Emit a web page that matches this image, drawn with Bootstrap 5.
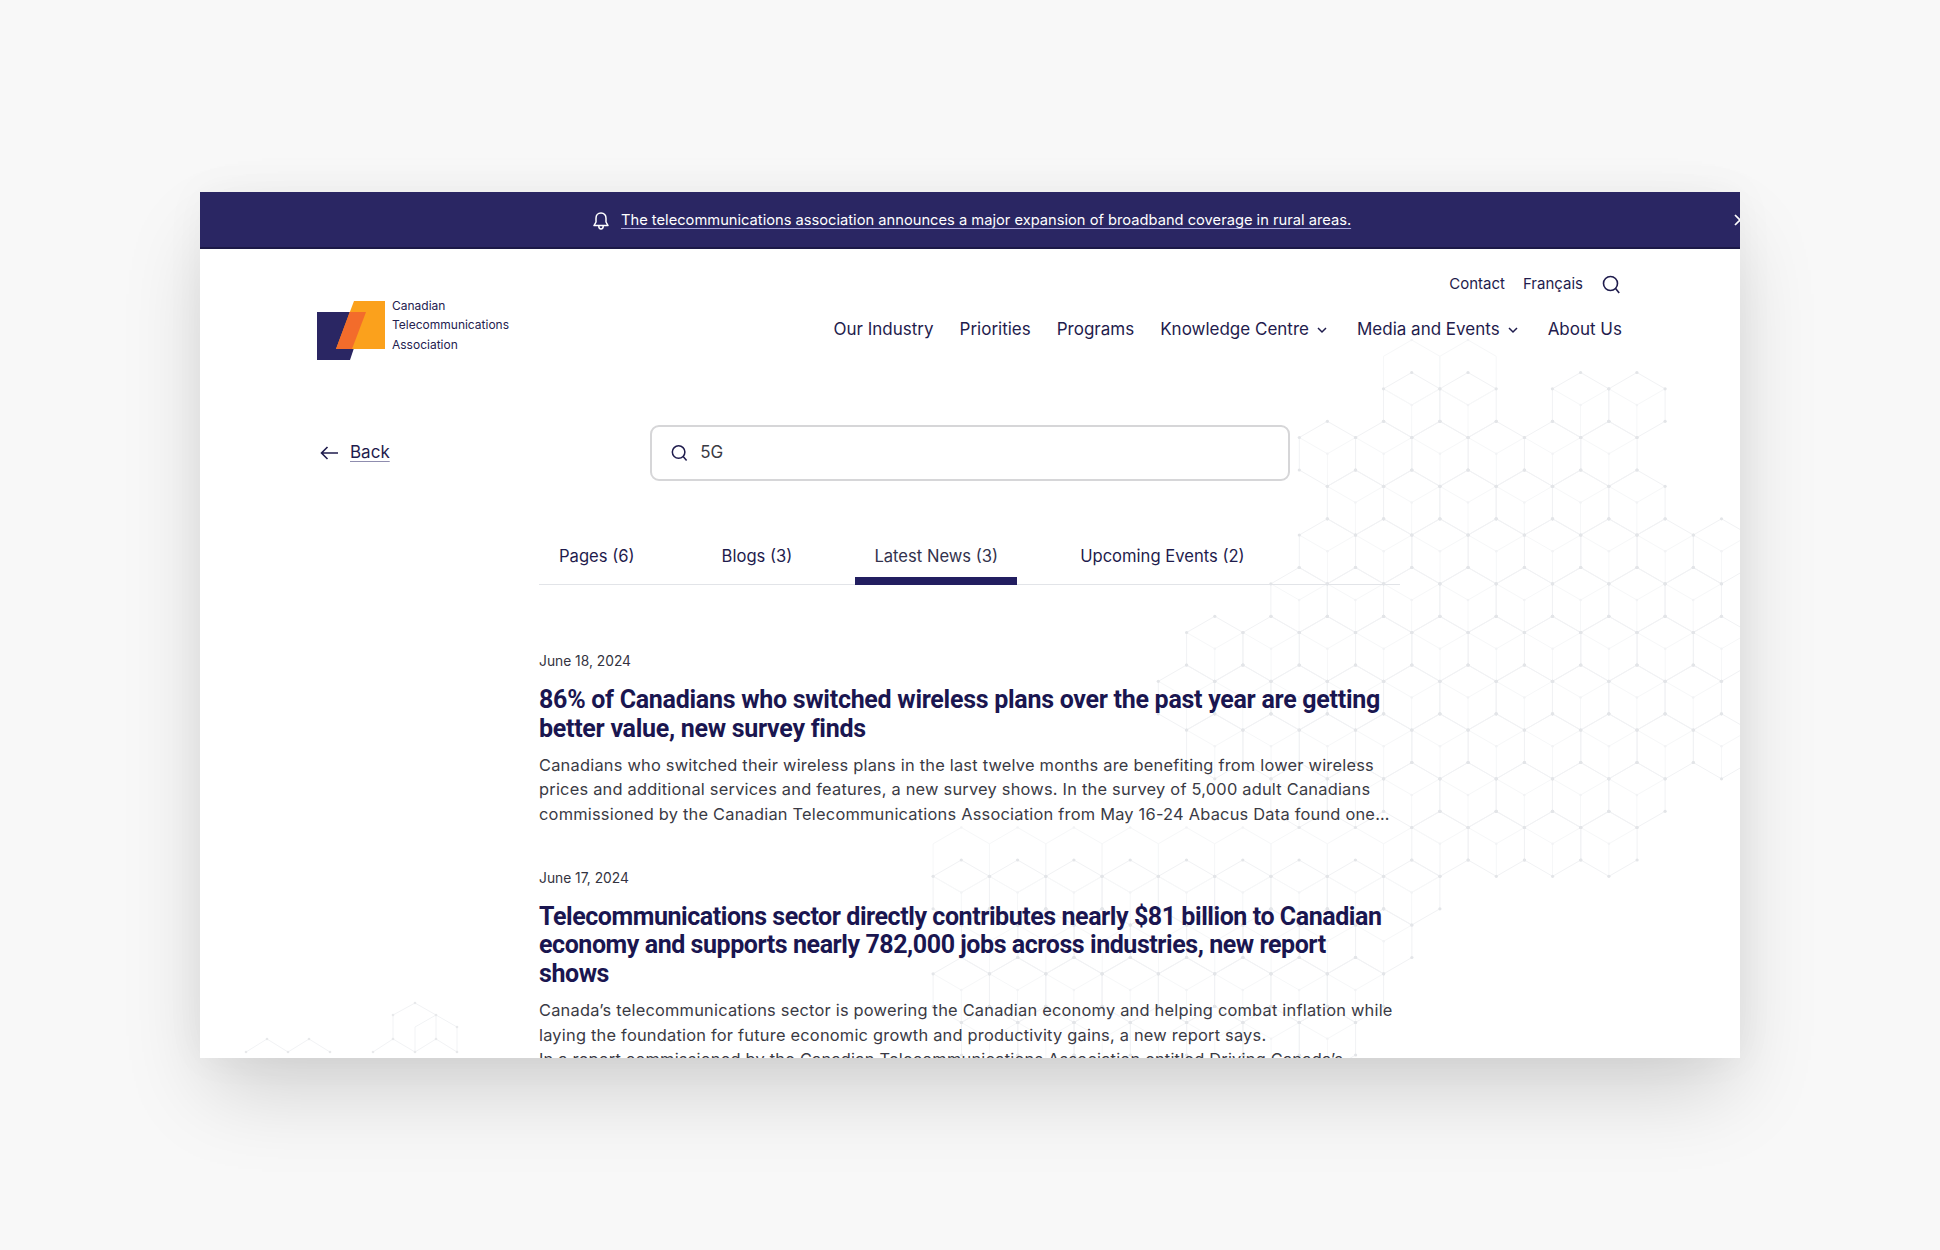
<!DOCTYPE html>
<html lang="en">
<head>
  <meta charset="UTF-8" />
  <meta name="viewport" content="width=device-width, initial-scale=1.0" />
  <title>Search | Canadian Telecommunications Association</title>
  <link href="https://cdn.jsdelivr.net/npm/bootstrap@5.3.0/dist/css/bootstrap.min.css" rel="stylesheet">
  <style>
    html, body { height: 1250px; overflow: hidden; }
    body { background: #f8f8f8; padding-top: 192px; font-family: Inter, "Liberation Sans", sans-serif; color: #1f1c4d; }
    .site-window { width: 1540px; height: 866px; margin: 0 auto; background: #fff; position: relative; overflow: hidden; }
    .shadow-wrap { width: 1540px; margin: 0 auto; box-shadow: 0 40px 80px -10px rgba(0,0,0,.17), 0 0 40px rgba(0,0,0,.04); height: 866px; }
    .hex-bg { position: absolute; left: 0; top: 0; width: 1540px; height: 866px; }
    .alert-bar { height: 57px; background: #2a2663; border-bottom: 2px solid #1c1947; color: #fff; position: relative; font-size: 14.7px; padding: 2px 0 0 392px; gap: 11px; }
    .alert-bar a { color: #fff; text-decoration-color: #a9a6dc; text-underline-offset: 3px; }
    .alert-close { position: absolute; right: -7px; top: 21px; background: none; border: 0; padding: 0; line-height: 0; }
    .site-body { position: relative; padding: 24px 118px 0 117px; }
    .logo-words { font-size: 12px; line-height: 19.4px; margin: -5px 0 0 6px; color: #24214f; }
    .logo-block { margin-top: 28px; }
    .util-links { height: 22px; font-size: 15px; gap: 18px; padding-right: 1px; }
    .util-links svg { margin-left: 1px; }
    .util-links a, .main-links a { color: #1f1c4d; text-decoration: none; }
    .main-links { margin-top: 22px; height: 26px; font-size: 17px; }
    .main-links a { margin-left: 26px; }
    .main-links a.has-sub { margin-right: 22px; position: relative; }
    .main-links a.has-sub svg { position: absolute; right: -18px; top: 10px; }
    .search-row { margin-top: 65px; height: 56px; }
    .back-col { width: 333px; padding-left: 3px; font-size: 17px; }
    .back-col a { color: #1f1c4d; text-decoration-color: #8f8daf; text-underline-offset: 3px; }
    .search-box { width: 640px; height: 56px; border: 2px solid #d6d6d8; border-radius: 9px; background: #fff; padding: 0 19px; }
    .search-box input { font-size: 17px; color: #3a3a44; font-family: inherit; background: transparent; }
    .tab-strip { margin: 49px 0 0 222px; width: 861px; height: 55px; border-bottom: 1px solid #e2e4e8; }
    .tab-strip .nav-link { height: 55px; padding: 14px 19px 0; color: #1f1c4d; font-size: 16.6px; margin-right: 44px; position: relative; }
    .tab-strip .nav-item:first-child .nav-link { padding-left: 20px; margin-right: 49px; }
    .tab-strip .nav-link.active { color: #33324d; }
    .tab-strip .nav-link.active::after { content: ""; position: absolute; left: 0; right: 0; bottom: 0; height: 8px; background: #221e60; }
    .news-list { margin: 66px 0 0 222px; width: 870px; }
    .news-item { margin-bottom: 41.5px; }
    .news-date { font-size: 13.8px; line-height: 20px; margin-bottom: 15px; color: #333340; }
    .news-title { font-family: Roboto, sans-serif; font-weight: 700; font-size: 25px; line-height: 28.6px; letter-spacing: -.28px; color: #1a1650; margin: 0 0 10px; }
    .news-item + .news-item .news-title { letter-spacing: -.44px; }
    .news-text { font-size: 16.4px; line-height: 24.3px; letter-spacing: .22px; color: #3a3a44; margin: 0; }
  </style>
</head>
<body>
  <div class="shadow-wrap">
    <div class="site-window">
      <svg class="hex-bg" id="hexBg" viewBox="200 192 1540 866" fill="none">
        <g stroke="#f2f3f5" fill="none">
          <path d="M246 1052L267 1039L288 1052L309 1039L330 1052M373 1052L393 1039L415 1052L436 1039L457 1052M393 1039V1015L415 1003L436 1015V1039M415 1027V1052M415 1027L436 1015L457 1027V1052"/>
        </g>
        <g fill="#e8e9eb">
          <circle cx="246" cy="1052" r="1.3"/><circle cx="267" cy="1039" r="1.3"/><circle cx="288" cy="1052" r="1.3"/>
          <circle cx="309" cy="1039" r="1.3"/><circle cx="330" cy="1052" r="1.3"/><circle cx="373" cy="1052" r="1.3"/>
          <circle cx="393" cy="1039" r="1.3"/><circle cx="393" cy="1015" r="1.3"/><circle cx="415" cy="1003" r="1.3"/>
          <circle cx="436" cy="1015" r="1.3"/><circle cx="436" cy="1039" r="1.3"/><circle cx="415" cy="1052" r="1.3"/>
          <circle cx="457" cy="1027" r="1.3"/><circle cx="457" cy="1052" r="1.3"/>
        </g>
      </svg>

      <div class="alert-bar d-flex align-items-center">
        <svg width="18" height="20" viewBox="0 0 18 20" fill="none" stroke="#fff" stroke-width="1.5" stroke-linejoin="round"><path d="M9 2C5.8 2 4 4.4 4 7.2V11L2 14.6H16L14 11V7.2C14 4.4 12.2 2 9 2Z"/><path d="M6.8 15C6.8 17 7.8 18 9 18S11.2 17 11.2 15"/></svg>
        <a href="#">The telecommunications association announces a major expansion of broadband coverage in rural areas.</a>
        <button class="alert-close" type="button" aria-label="Close"><svg width="14" height="14" viewBox="0 0 14 14" stroke="#fff" stroke-width="1.7"><path d="M2 2L12 12M12 2L2 12"/></svg></button>
      </div>

      <div class="site-body">
        <header class="d-flex justify-content-between align-items-start">
          <a href="#" class="logo-block d-flex text-decoration-none">
            <svg width="69" height="59" viewBox="317 301 69 59">
              <path d="M317 312H366L350 360H317Z" fill="#2a2663"/>
              <path d="M354 301H385V349H336Z" fill="#fba11c"/>
              <path d="M349.7 312H366L352 349H336Z" fill="#f36c2b"/>
            </svg>
            <p class="logo-words">Canadian<br>Telecommunications<br>Association</p>
          </a>
          <div class="d-flex flex-column align-items-end">
            <div class="util-links d-flex align-items-center">
              <a href="#">Contact</a>
              <a href="#">Français</a>
              <svg width="19" height="19" viewBox="0 0 19 19" fill="none" stroke="#1f1c4d" stroke-width="1.6"><circle cx="8.5" cy="8.5" r="7"/><path d="M13.6 13.6L17.2 18"/></svg>
            </div>
            <nav class="main-links d-flex align-items-center">
              <a href="#">Our Industry</a>
              <a href="#">Priorities</a>
              <a href="#">Programs</a>
              <a href="#" class="has-sub">Knowledge Centre<svg width="10" height="7" viewBox="0 0 10 7" fill="none" stroke="#1f1c4d" stroke-width="1.5"><path d="M1 1L5 5L9 1"/></svg></a>
              <a href="#" class="has-sub">Media and Events<svg width="10" height="7" viewBox="0 0 10 7" fill="none" stroke="#1f1c4d" stroke-width="1.5"><path d="M1 1L5 5L9 1"/></svg></a>
              <a href="#">About Us</a>
            </nav>
          </div>
        </header>

        <div class="search-row d-flex align-items-center">
          <div class="back-col d-flex align-items-center gap-2">
            <svg width="18" height="14" viewBox="0 0 18 14" fill="none" stroke="#1f1c4d" stroke-width="1.6"><path d="M18 7H1.5M7.5 1L1.5 7L7.5 13"/></svg>
            <a href="#" class="ms-1">Back</a>
          </div>
          <div class="search-box d-flex align-items-center gap-2">
            <svg width="18" height="18" viewBox="0 0 18 18" fill="none" stroke="#1f1c4d" stroke-width="1.6"><circle cx="8" cy="8" r="6.6"/><path d="M12.8 12.8L16.4 17"/></svg>
            <input type="text" class="form-control border-0 p-0 shadow-none ms-1" value="5G">
          </div>
        </div>

        <ul class="nav tab-strip">
          <li class="nav-item"><a class="nav-link" href="#">Pages (6)</a></li>
          <li class="nav-item"><a class="nav-link" href="#">Blogs (3)</a></li>
          <li class="nav-item"><a class="nav-link active" href="#">Latest News (3)</a></li>
          <li class="nav-item"><a class="nav-link" href="#">Upcoming Events (2)</a></li>
        </ul>

        <div class="news-list">
          <article class="news-item">
            <div class="news-date">June 18, 2024</div>
            <h2 class="news-title">86% of Canadians who switched wireless plans over the past year are getting<br>better value, new survey finds</h2>
            <p class="news-text">Canadians who switched their wireless plans in the last twelve months are benefiting from lower wireless<br>prices and additional services and features, a new survey shows. In the survey of 5,000 adult Canadians<br>commissioned by the Canadian Telecommunications Association from May 16-24 Abacus Data found one…</p>
          </article>
          <article class="news-item">
            <div class="news-date">June 17, 2024</div>
            <h2 class="news-title">Telecommunications sector directly contributes nearly $81 billion to Canadian<br>economy and supports nearly 782,000 jobs across industries, new report<br>shows</h2>
            <p class="news-text">Canada’s telecommunications sector is powering the Canadian economy and helping combat inflation while<br>laying the foundation for future economic growth and productivity gains, a new report says.<br>In a report commissioned by the Canadian Telecommunications Association entitled Driving Canada’s</p>
          </article>
        </div>
      </div>
    </div>
  </div>

  <script src="https://cdn.jsdelivr.net/npm/bootstrap@5.3.0/dist/js/bootstrap.bundle.min.js"></script>
  <script>
    // hex lattice behind the page: [row, first column, last column]
    const hexRows = [[0,-1,0],[0,2,3],[1,-2,3],[2,-2,3],[3,-2,5],[4,-3,4],[5,-4,5],[6,-5,4],[7,-4,5],[8,-3,3],[9,0,3],
      [10,-9,-1],[11,-8,-1],[12,-9,-2],[13,-8,-2]];
    const ghosts = [[0,-1,0],[10,-9,-1]];
    const W = 28.15, S = 16.25;

    function hexPoints(x, y) {
      return [[x,y-2*S],[x+W,y-S],[x+W,y+S],[x,y+2*S],[x-W,y+S],[x-W,y-S]];
    }
    function cellCentre(r, n) {
      return [(r % 2 ? 1440 : 1468) + 56.3 * n, 405 + 48.75 * r];
    }
    function ring(pts) {
      return "M" + pts.map(p => p[0].toFixed(1) + " " + p[1].toFixed(1)).join("L") + "Z";
    }

    let strong = "", faint = "", dots = "", faintDots = "";
    hexRows.forEach(([r, a, b]) => {
      for (let n = a; n <= b; n++) {
        const [x, y] = cellCentre(r, n), pts = hexPoints(x, y);
        strong += ring(pts);
        faint += `M${x} ${y}L${pts[1][0]} ${pts[1][1]}M${x} ${y}L${pts[5][0]} ${pts[5][1]}M${x} ${y}V${y + 2 * S}`;
        pts.forEach(p => dots += `<circle cx="${p[0].toFixed(1)}" cy="${p[1].toFixed(1)}" r="1.6"/>`);
        faintDots += `<circle cx="${x.toFixed(1)}" cy="${y}" r="1.3"/>`;
      }
    });
    ghosts.forEach(([r, a, b]) => {
      for (let n = a; n <= b; n++) {
        const [x, y] = cellCentre(r, n), pts = hexPoints(x, y - 2 * S);
        faint += ring(pts);
        faintDots += `<circle cx="${x.toFixed(1)}" cy="${pts[0][1]}" r="1.3"/>`;
      }
    });
    document.getElementById("hexBg").insertAdjacentHTML("afterbegin",
      `<path d="${faint}" stroke="#f6f7f8"/><path d="${strong}" stroke="#f1f2f4"/>` +
      `<g fill="#f2f3f5">${faintDots}</g><g fill="#e3e5e8">${dots}</g>`);
  </script>
</body>
</html>
